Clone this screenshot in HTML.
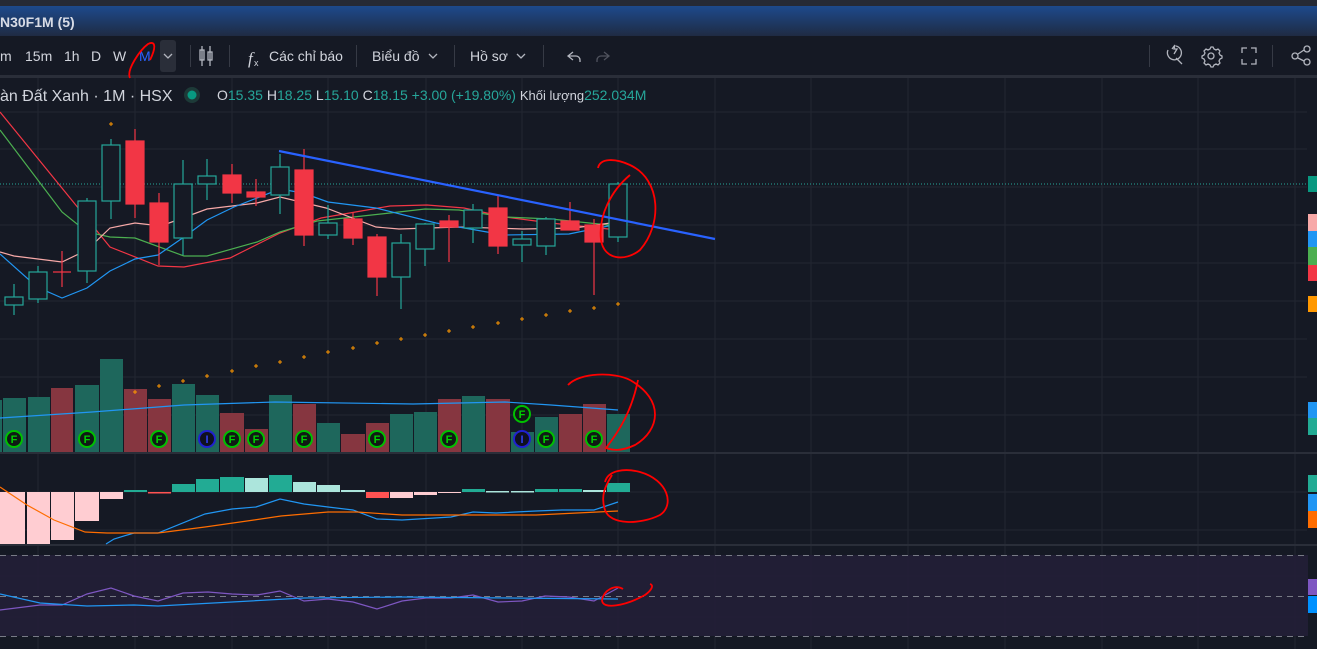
<!DOCTYPE html>
<html><head><meta charset="utf-8"><style>
html,body{margin:0;padding:0;width:1317px;height:649px;overflow:hidden;background:#151924;font-family:"Liberation Sans","Noto Sans CJK SC",sans-serif}
#top{position:absolute;left:0;top:0;width:1317px;height:6px;background:#262a35}
#title{position:absolute;left:0;top:6px;width:1317px;height:30px;background:linear-gradient(#1d4a8c,#1f2b43);color:#d8dce6;font-weight:bold;font-size:14px;line-height:32px}
#tb{position:absolute;left:0;top:37px;width:1317px;height:38px;background:#151924;color:#d1d4dc;font-size:14px}
#tb span{position:absolute;top:11px}
.sep{position:absolute;top:8px;width:1px;height:22px;background:#363a45}
#bar2{position:absolute;left:0;top:75px;width:1317px;height:3px;background:#2a2e39}
svg{position:absolute;left:0;top:0}
</style></head><body>
<div id="top"></div>
<div id="title">N30F1M (5)</div>
<div id="tb">
<span style="left:0">m</span><span style="left:25px">15m</span><span style="left:64px">1h</span><span style="left:91px">D</span><span style="left:113px">W</span><span style="left:139px;color:#2962ff">M</span>
<div style="position:absolute;left:160px;top:3px;width:16px;height:32px;background:#2a2e39;border-radius:3px"></div>
<div class="sep" style="left:190px"></div><div class="sep" style="left:229px"></div>
<span style="left:269px">Các chỉ báo</span>
<div class="sep" style="left:356px"></div>
<span style="left:372px">Biểu đồ</span>
<div class="sep" style="left:454px"></div>
<span style="left:470px">Hồ sơ</span>
<div class="sep" style="left:543px"></div>
<div class="sep" style="left:1149px"></div><div class="sep" style="left:1272px"></div>
</div>
<div id="bar2"></div>
<svg width="1317" height="649" viewBox="0 0 1317 649">
<g fill="none" stroke="#b2b5be" stroke-width="1.3">
<path d="M164 54l4 4 4-4"/>
<path d="M202 46v20M210 46v20" /><rect x="200" y="50" width="4" height="10"/><rect x="208" y="52" width="4" height="8"/>
<path d="M429 54l4 4 4-4M517 54l4 4 4-4"/>
<path d="M573 52l-5 4 5 4M568 56h8a4 4 0 0 1 4 4v2"/>
<path d="M1168 50a7 7 0 1 0 8 -4M1176 58l6 6M1172 49l3 -4 -1 4h3l-3 5" />
<circle cx="1211" cy="56" r="3"/><path d="M1211 47l2 0 1 2 2 1 2-1 2 2-1 2 1 2 2 1v2l-2 1-1 2 1 2-2 2-2-1-2 1-1 2h-2l-1-2-2-1-2 1-2-2 1-2-1-2-2-1v-2l2-1 1-2-1-2 2-2 2 1 2-1z"/>
<path d="M1242 53v-5h5M1251 48h5v5M1256 59v5h-5M1247 64h-5v-5"/>
<circle cx="1307" cy="49" r="3"/><circle cx="1307" cy="62" r="3"/><circle cx="1295" cy="56" r="3"/><path d="M1298 54l6-4M1298 58l6 3"/>
</g>
<path d="M604 60l5-4-5-4M609 56h-8a4 4 0 0 0-4 4v2" fill="none" stroke="#50535e" stroke-width="1.3"/>
<text x="248" y="64" fill="#d1d4dc" font-size="17" font-style="italic" font-family="Liberation Serif">f</text><text x="254" y="66" fill="#d1d4dc" font-size="9">x</text>
<g stroke="#222632" stroke-width="1">
<path d="M0 112H1307M0 149H1307M0 187H1307M0 225H1307M0 263H1307M0 301H1307M0 339H1307M0 377H1307M0 415H1307M0 492H1307M0 530H1307M0 576H1307M0 617H1307"/>
<path d="M38 78V649M135 78V649M232 78V649M328 78V649M426 78V649M522 78V649M618 78V649M715 78V649M811 78V649M908 78V649M1005 78V649M1102 78V649M1198 78V649M1295 78V649"/>
</g>
<rect x="0" y="452" width="1317" height="2" fill="#2a2e39"/>
<rect x="0" y="544" width="1317" height="2" fill="#2a2e39"/>
<rect x="0" y="555" width="1308" height="81" fill="#221f37" opacity="0.9"/>
<g stroke="#787b86" stroke-dasharray="6 5"><path d="M0 555.5H1308M0 596.5H1308M0 636.5H1308"/></g>
<path d="M0 184H1307" stroke="#26a69a" stroke-dasharray="1 2"/>
<text x="0" y="101" fill="#d1d4dc" font-size="16">àn Đất Xanh · 1M · HSX</text>
<circle cx="192" cy="95" r="8" fill="#1d3a38"/><circle cx="192" cy="95" r="4.5" fill="#089981"/>
<text x="217" y="100" font-size="14" fill="#d1d4dc"><tspan x="217">O</tspan><tspan fill="#26a69a">15.35</tspan> <tspan>H</tspan><tspan fill="#26a69a">18.25</tspan> <tspan>L</tspan><tspan fill="#26a69a">15.10</tspan> <tspan>C</tspan><tspan fill="#26a69a">18.15 +3.00 (+19.80%)</tspan> <tspan font-size="13">Khối lượng</tspan><tspan fill="#26a69a">252.034M</tspan></text>
<g fill="#1e675c">
<rect x="0" y="400" width="2" height="52"/><rect x="3" y="398" width="23" height="54"/><rect x="28" y="397" width="22" height="55"/><rect x="75" y="385" width="24" height="67"/><rect x="100" y="359" width="23" height="93"/><rect x="172" y="384" width="23" height="68"/><rect x="196" y="395" width="23" height="57"/><rect x="269" y="395" width="23" height="57"/><rect x="317" y="423" width="23" height="29"/><rect x="390" y="414" width="23" height="38"/><rect x="414" y="412" width="23" height="40"/><rect x="462" y="396" width="23" height="56"/><rect x="511" y="432" width="23" height="20"/><rect x="535" y="417" width="23" height="35"/><rect x="607" y="414" width="23" height="38"/></g>
<g fill="#863640"><rect x="51" y="388" width="22" height="64"/><rect x="124" y="389" width="23" height="63"/><rect x="148" y="399" width="23" height="53"/><rect x="220" y="413" width="24" height="39"/><rect x="245" y="429" width="23" height="23"/><rect x="293" y="404" width="23" height="48"/><rect x="341" y="434" width="24" height="18"/><rect x="366" y="423" width="23" height="29"/><rect x="438" y="399" width="23" height="53"/><rect x="486" y="399" width="24" height="53"/><rect x="559" y="414" width="23" height="38"/><rect x="583" y="404" width="23" height="48"/></g>
<polyline fill="none" stroke="#2196f3" stroke-width="1.2" points="0,418 92,412 184,405 275,402 413,404 505,402 551,405 618,410"/>
<g font-size="11" font-weight="bold" text-anchor="middle">
<g stroke="#00c000" stroke-width="2" fill="#0f1a14">
<circle cx="14" cy="439" r="8"/><circle cx="87" cy="439" r="8"/><circle cx="159" cy="439" r="8"/><circle cx="232" cy="439" r="8"/><circle cx="256" cy="439" r="8"/><circle cx="304" cy="439" r="8"/><circle cx="377" cy="439" r="8"/><circle cx="449" cy="439" r="8"/><circle cx="546" cy="439" r="8"/><circle cx="594" cy="439" r="8"/><circle cx="522" cy="414" r="8"/></g>
<g stroke="#2020d0" stroke-width="2" fill="#0f1020"><circle cx="207" cy="439" r="8"/><circle cx="522" cy="439" r="8"/></g>
<g fill="#00d000"><text x="14" y="443">F</text><text x="87" y="443">F</text><text x="159" y="443">F</text><text x="232" y="443">F</text><text x="256" y="443">F</text><text x="304" y="443">F</text><text x="377" y="443">F</text><text x="449" y="443">F</text><text x="546" y="443">F</text><text x="594" y="443">F</text><text x="522" y="418">F</text></g>
<g fill="#3040f0"><text x="207" y="443">I</text><text x="522" y="443">I</text></g>
</g>
<g fill="none" stroke-width="1.2">
<polyline stroke="#f23645" points="0,112 110,247 158,266 184,267 230,258 280,233 321,218 390,206 427,205 464,208 505,217 551,223 618,230"/>
<polyline stroke="#4caf50" points="0,130 62,212 87,232 110,237 135,238 184,256 207,256 257,242 280,232 317,221 390,213 425,209 459,210 505,217 551,219 618,226"/>
<polyline stroke="#f7a9a8" points="0,252 14,256 62,262 87,250 110,228 135,223 161,226 207,209 257,203 280,197 326,208 376,227 399,229 459,227 523,229 574,228 618,222"/>
<polyline stroke="#2196f3" points="0,254 37,287 62,298 87,288 110,271 135,259 158,255 184,237 207,220 234,207 280,189 303,193 328,202 376,208 436,223 487,232 505,235 569,234 618,224"/>
</g>
<g stroke="#26a69a" stroke-width="1.2" fill="#161a25">
<path d="M14 284V315M38 266V303M87 198V283M111 139V219M183 160V255M207 159V200M280 154V214M328 205V239M401 234V309M425 223V266M473 204V243M522 231V262M546 217V255M618 182V242"/>
<rect x="5" y="297" width="18" height="8"/><rect x="29" y="272" width="18" height="27"/><rect x="78" y="201" width="18" height="70"/><rect x="102" y="145" width="18" height="56"/><rect x="174" y="184" width="18" height="54"/><rect x="198" y="176" width="18" height="8"/><rect x="271" y="167" width="18" height="28"/><rect x="319" y="223" width="18" height="12"/><rect x="392" y="243" width="18" height="34"/><rect x="416" y="224" width="18" height="25"/><rect x="464" y="210" width="18" height="18"/><rect x="513" y="239" width="18" height="6"/><rect x="537" y="219" width="18" height="27"/><rect x="609" y="184" width="18" height="53"/>
</g>
<g stroke="#f23645" stroke-width="1.2" fill="#f23645">
<path d="M62 251V287M53 272H71M135 129V218M159 193V265M232 164V203M256 179V206M304 149V246M353 213V245M377 234V296M449 215V262M498 196V254M570 202V230M594 219V295"/>
<rect x="126" y="141" width="18" height="63"/><rect x="150" y="203" width="18" height="39"/><rect x="223" y="175" width="18" height="18"/><rect x="247" y="192" width="18" height="5"/><rect x="295" y="170" width="18" height="65"/><rect x="344" y="219" width="18" height="19"/><rect x="368" y="237" width="18" height="40"/><rect x="440" y="221" width="18" height="6"/><rect x="489" y="208" width="18" height="38"/><rect x="561" y="221" width="18" height="9"/><rect x="585" y="225" width="18" height="17"/>
</g>
<path d="M279 151L715 239" stroke="#2962ff" stroke-width="2.2"/>
<g stroke="#ff9800" stroke-width="1">
<path d="M109 124h4M111 122v4"/>
<path d="M133 392h4M135 390v4M157 386h4M159 384v4M181 381h4M183 379v4M205 376h4M207 374v4M230 371h4M232 369v4M254 366h4M256 364v4M278 362h4M280 360v4M302 357h4M304 355v4M326 352h4M328 350v4M351 348h4M353 346v4M375 343h4M377 341v4M399 339h4M401 337v4M423 335h4M425 333v4M447 331h4M449 329v4M471 327h4M473 325v4M496 323h4M498 321v4M520 319h4M522 317v4M544 315h4M546 313v4M568 311h4M570 309v4M592 308h4M594 306v4M616 304h4M618 302v4"/>
</g>
<g fill="#ffcdd2"><rect x="0" y="492" width="25" height="52"/><rect x="27" y="492" width="23" height="52"/><rect x="51" y="492" width="23" height="48"/><rect x="75" y="492" width="24" height="29"/><rect x="100" y="492" width="23" height="7"/><rect x="390" y="492" width="23" height="6"/><rect x="414" y="492" width="23" height="3"/><rect x="438" y="492" width="23" height="1"/></g>
<rect x="366" y="492" width="23" height="6" fill="#ff5252"/><rect x="148" y="492" width="23" height="1.5" fill="#ff5252"/>
<g fill="#22ab94"><rect x="124" y="490" width="23" height="2"/><rect x="172" y="484" width="23" height="8"/><rect x="196" y="479" width="23" height="13"/><rect x="220" y="477" width="24" height="15"/><rect x="269" y="475" width="23" height="17"/><rect x="462" y="489" width="23" height="3"/><rect x="535" y="489" width="23" height="3"/><rect x="559" y="489" width="23" height="3"/><rect x="607" y="483" width="23" height="9"/></g>
<g fill="#ace5dc"><rect x="245" y="478" width="23" height="14"/><rect x="293" y="482" width="23" height="10"/><rect x="317" y="485" width="23" height="7"/><rect x="341" y="490" width="24" height="2"/><rect x="486" y="491" width="23" height="1.5"/><rect x="511" y="491" width="23" height="1.5"/><rect x="583" y="490" width="23" height="2"/></g>
<g fill="none" stroke-width="1.2">
<polyline stroke="#2196f3" points="106,544 114,539 134,533 158,533 205,514 232,509 256,507 280,499 304,504 328,507 353,510 377,519 402,520 451,517 473,512 496,513 536,511 562,510 594,510 618,502"/>
<polyline stroke="#ff6d00" points="0,487 27,505 54,520 85,532 107,533 158,533 205,527 254,520 281,516 328,512 357,512 402,515 446,515 536,515 618,511"/>
<polyline stroke="#7e57c2" points="0,610 40,605 62,605 87,594 111,588 134,596 158,601 183,593 208,592 232,594 257,595 280,591 304,601 328,599 353,602 377,609 402,601 426,598 451,598 473,595 498,602 522,601 545,596 569,597 594,601 618,588"/>
<polyline stroke="#2196f3" points="0,594 40,603 87,606 134,605 158,606 232,602 304,598 402,597 618,599"/>
</g>
<rect x="1308" y="176" width="9" height="16" fill="#089981"/>
<rect x="1308" y="214" width="9" height="17" fill="#f7a9a8"/><rect x="1308" y="231" width="9" height="16" fill="#2196f3"/><rect x="1308" y="247" width="9" height="18" fill="#4caf50"/><rect x="1308" y="265" width="9" height="16" fill="#f23645"/><rect x="1308" y="296" width="9" height="16" fill="#ff9800"/>
<rect x="1308" y="402" width="9" height="16" fill="#2196f3"/><rect x="1308" y="418" width="9" height="17" fill="#22ab94"/>
<rect x="1308" y="475" width="9" height="17" fill="#22ab94"/><rect x="1308" y="494" width="9" height="17" fill="#2196f3"/><rect x="1308" y="511" width="9" height="17" fill="#ff6d00"/>
<rect x="1308" y="579" width="9" height="16" fill="#7e57c2"/><rect x="1308" y="596" width="9" height="17" fill="#0091ff"/>
<g fill="none" stroke="#ff0000" stroke-width="1.8">
<path d="M130 78C126 70 140 50 148 44C156 40 156 48 150 60"/>
<path d="M598 168C600 158 615 158 630 165C662 180 662 225 640 250C625 262 604 260 601 240C598 215 612 190 630 175"/>
<path d="M568 385C580 372 615 372 630 380C665 400 660 430 635 445C620 452 612 450 606 448C620 430 632 410 638 380"/>
<path d="M605 482C608 470 625 468 640 472C668 480 675 505 660 515C640 525 610 525 605 510C600 495 606 485 612 475"/>
<path d="M623 589C615 584 604 590 602 600C602 610 625 606 645 595C652 590 654 585 650 584"/>
</g>
</svg>
</body></html>
